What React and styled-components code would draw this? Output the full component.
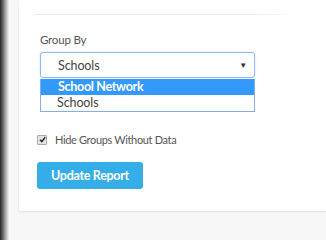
import styled, { createGlobalStyle } from "styled-components";

const GlobalStyle = createGlobalStyle`
  html, body {
    margin: 0;
    padding: 0;
    background: #f7f7f7;
  }
  body {
    font-family: "Lato", "Liberation Sans", sans-serif;
    color: #555;
  }
`;

const Page = styled.div`
  position: relative;
  width: 326px;
  height: 240px;
  overflow: hidden;
  padding-left: 19px;
  box-sizing: border-box;

  &::before {
    content: "";
    position: absolute;
    left: 0;
    top: 0;
    bottom: 0;
    width: 9px;
    background: linear-gradient(to right, rgba(0, 0, 0, 0.85), rgba(0, 0, 0, 0));
  }
`;

const Card = styled.div`
  height: 211px;
  background: #fff;
  box-shadow: 0 1px 2px rgba(0, 0, 0, 0.1);
  padding: 14px 0 0 15px;
  box-sizing: border-box;
`;

const Divider = styled.div`
  height: 1px;
  width: 259px;
  background: linear-gradient(to right, #eaeaea 85%, rgba(234, 234, 234, 0));
`;

const Form = styled.div`
  display: flex;
  flex-direction: column;
  align-items: flex-start;
  padding: 17px 0 0 3px;
`;

const Label = styled.label`
  font-size: 11.5px;
  letter-spacing: -0.2px;
  line-height: 16px;
  color: #555;
  margin-left: 3px;
`;

const Field = styled.div`
  position: relative;
  margin: 4px 0 0 3px;
  width: 215px;
`;

const SelectBox = styled.div`
  display: flex;
  align-items: center;
  justify-content: space-between;
  height: 26px;
  box-sizing: border-box;
  border: 1px solid #8fb8ee;
  border-radius: 3px;
  box-shadow: 0 0 2px rgba(80, 150, 230, 0.35);
  padding: 0 7px 0 17px;
  font-size: 12.5px;
  letter-spacing: -0.1px;
  color: #444;
`;

const Arrow = styled.span`
  font-size: 8px;
  color: #333;
`;

const Options = styled.ul`
  list-style: none;
  margin: 1px 0 0;
  padding: 0;
  border: 1px solid #86aee6;
  border-top: none;
  background: #fff;
`;

const Option = styled.li`
  height: 16px;
  line-height: 16px;
  font-size: 12.5px;
  letter-spacing: ${(p) => (p.$active ? "-0.3px" : "-0.1px")};
  padding-left: ${(p) => (p.$active ? "17px" : "16px")};
  background: ${(p) => (p.$active ? "#3399fb" : "#fff")};
  color: ${(p) => (p.$active ? "#fff" : "#444")};
  font-weight: ${(p) => (p.$active ? 700 : 400)};
`;

const CheckRow = styled.div`
  display: flex;
  align-items: center;
  gap: 8px;
  margin-top: 21px;
  font-size: 11px;
  letter-spacing: -0.35px;
  color: #555;
`;

const Box = styled.span`
  display: inline-flex;
  align-items: center;
  justify-content: center;
  width: 8px;
  height: 8px;
  border: 1px solid #aaa;
  border-radius: 1px;
  background: #e4e4e4;
`;

const Button = styled.button`
  margin-top: 16px;
  width: 106px;
  height: 27px;
  border: none;
  border-radius: 3px;
  background: #35ade6;
  color: #fff;
  font-family: inherit;
  font-size: 12.5px;
  letter-spacing: -0.3px;
  font-weight: 700;
  cursor: pointer;
`;

export default function App() {
  return (
    <>
      <GlobalStyle />
      <Page>
        <Card>
          <Divider />
          <Form>
            <Label>Group By</Label>
            <Field>
              <SelectBox>
                <span>Schools</span>
                <Arrow>▼</Arrow>
              </SelectBox>
              <Options>
                <Option $active>School Network</Option>
                <Option>Schools</Option>
              </Options>
            </Field>
            <CheckRow>
              <Box>
                <svg width="7" height="7" viewBox="0 0 7 7">
                  <path d="M1 3.8 L2.8 5.6 L6.2 1.2" fill="none" stroke="#222" strokeWidth="1.4" />
                </svg>
              </Box>
              <span>Hide Groups Without Data</span>
            </CheckRow>
            <Button>Update Report</Button>
          </Form>
        </Card>
      </Page>
    </>
  );
}
